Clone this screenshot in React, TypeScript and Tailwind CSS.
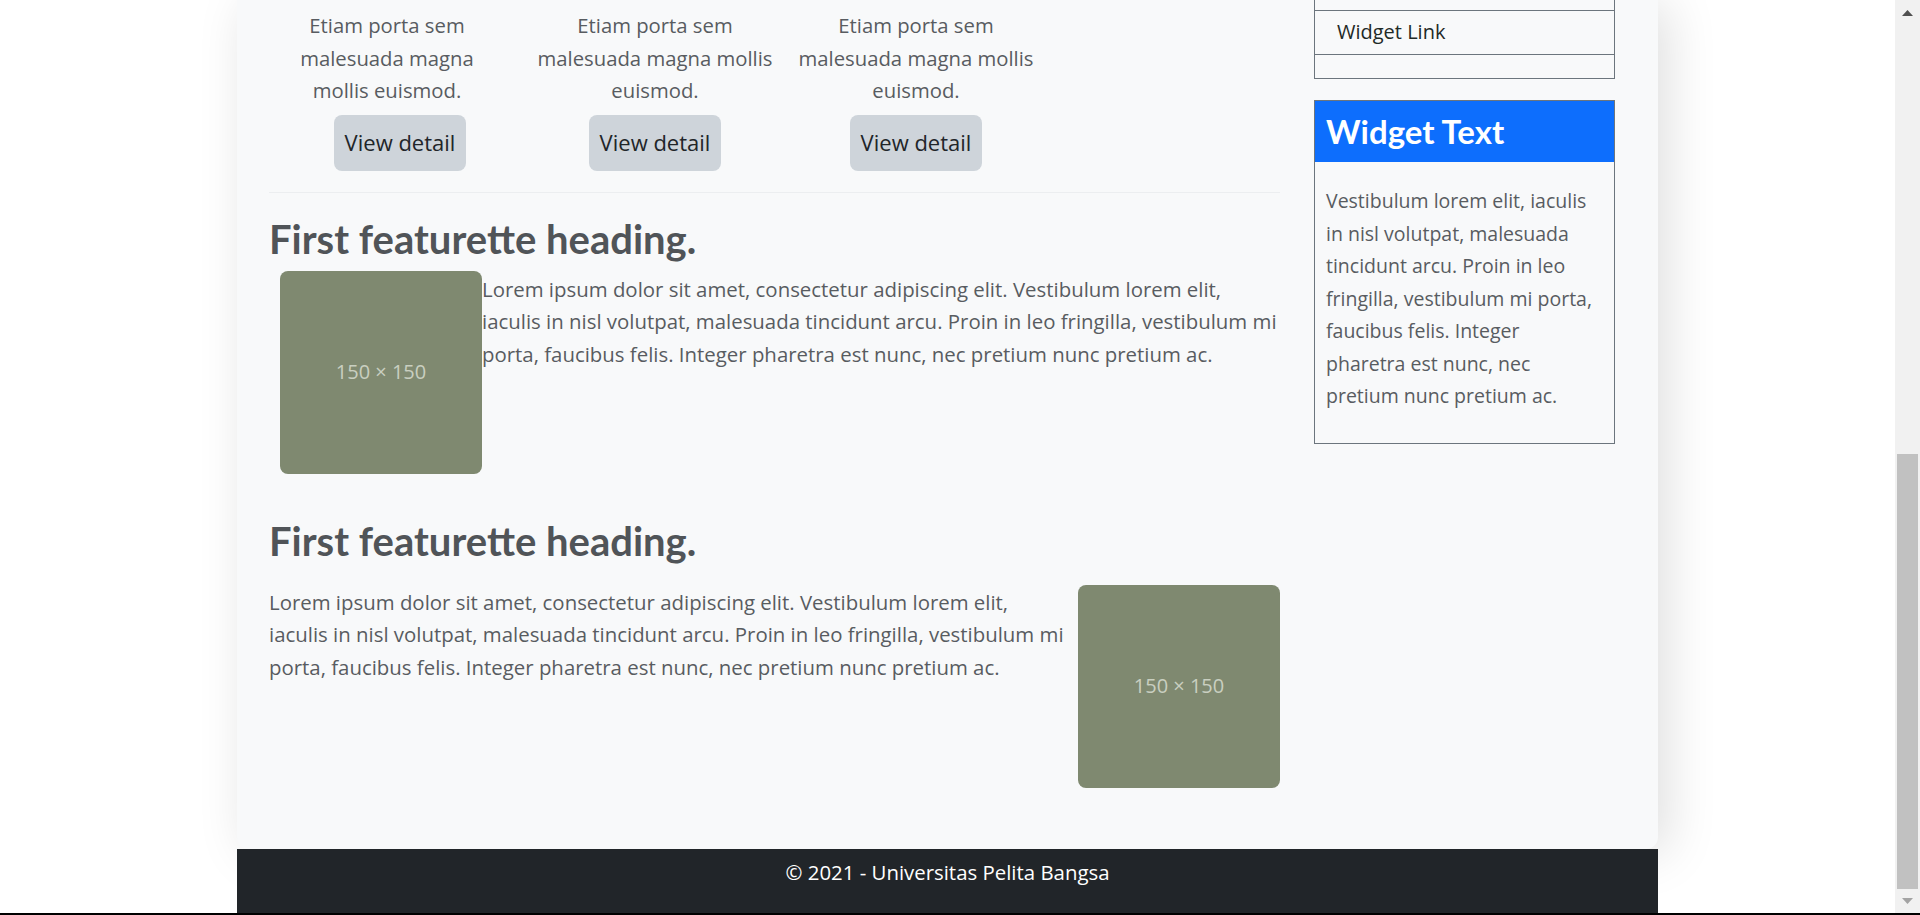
import React from "react";

const body = "font-['Open_Sans','Liberation_Sans',sans-serif]";
const heading = "font-['Lato','Liberation_Sans',sans-serif]";

function Lines({ lines }: { lines: string[] }) {
  return (
    <>
      {lines.map((l, i) => (
        <React.Fragment key={i}>
          {l}
          {i < lines.length - 1 && <br />}
        </React.Fragment>
      ))}
    </>
  );
}

function Placeholder({ className = "" }: { className?: string }) {
  return (
    <div
      className={`w-[202px] h-[203px] flex-none rounded-[8px] bg-[#7f8970] flex items-center justify-center text-[20px] text-[#c9cfc0] ${className}`}
    >
      150 × 150
    </div>
  );
}

function MarketingCol({
  lines,
  className = "",
  btnClass = "",
}: {
  lines: string[];
  className?: string;
  btnClass?: string;
}) {
  return (
    <div className={`w-[260px] flex flex-col items-center text-center ${className}`}>
      <p className="text-[20.3px] leading-[32.5px] text-[#585c61] whitespace-nowrap">
        <Lines lines={lines} />
      </p>
      <button
        className={`mt-[8px] w-[132px] h-[56px] rounded-[8px] bg-[#ced4da] text-[22px] text-[#212529] ${btnClass}`}
      >
        View detail
      </button>
    </div>
  );
}

export default function App() {
  const lorem = [
    "Lorem ipsum dolor sit amet, consectetur adipiscing elit. Vestibulum lorem elit,",
    "iaculis in nisl volutpat, malesuada tincidunt arcu. Proin in leo fringilla, vestibulum mi",
    "porta, faucibus felis. Integer pharetra est nunc, nec pretium nunc pretium ac.",
  ];
  const widget = [
    "Vestibulum lorem elit, iaculis",
    "in nisl volutpat, malesuada",
    "tincidunt arcu. Proin in leo",
    "fringilla, vestibulum mi porta,",
    "faucibus felis. Integer",
    "pharetra est nunc, nec",
    "pretium nunc pretium ac.",
  ];

  return (
    <div className={`w-[1920px] h-[915px] flex flex-col overflow-hidden bg-white ${body}`}>
      <div className="h-[913px] flex">
        {/* page */}
        <div className="flex-1 overflow-hidden">
          <div className="w-[1421px] mx-auto flex flex-col">
            <div className="h-[849px] bg-[#f8f9fa] rounded-b-[12px] shadow-[10px_4px_50px_rgba(0,0,0,0.13)] flex">
              {/* main column */}
              <div className="w-[1011px] ml-[32px] flex flex-col">
                <div className="flex pt-[9px]">
                  <MarketingCol
                    className="ml-[-12px]"
                    btnClass="ml-[26px]"
                    lines={["Etiam porta sem", "malesuada magna", "mollis euismod."]}
                  />
                  <MarketingCol
                    className="ml-[8px]"
                    lines={["Etiam porta sem", "malesuada magna mollis", "euismod."]}
                  />
                  <MarketingCol
                    className="ml-[1px]"
                    lines={["Etiam porta sem", "malesuada magna mollis", "euismod."]}
                  />
                </div>

                <hr className="mt-[21px] border-0 border-t border-[#eceef0]" />

                <h2 className={`mt-[22px] text-[40px] leading-[48px] font-bold text-[#505458] ${heading}`}>
                  First featurette heading.
                </h2>
                <div className="flex mt-[8px]">
                  <Placeholder className="ml-[11px]" />
                  <p className="mt-[2px] text-[20.4px] leading-[32.5px] text-[#585c61] whitespace-nowrap">
                    <Lines lines={lorem} />
                  </p>
                </div>

                <h2 className={`mt-[43px] text-[40px] leading-[48px] font-bold text-[#505458] ${heading}`}>
                  First featurette heading.
                </h2>
                <div className="flex items-start mt-[20px]">
                  <p className="mt-[1px] text-[20.4px] leading-[32.5px] text-[#585c61] whitespace-nowrap">
                    <Lines lines={lorem} />
                  </p>
                  <Placeholder className="ml-auto" />
                </div>
              </div>

              {/* sidebar */}
              <div className="w-[301px] ml-[34px] flex flex-col">
                <ul className="mt-[-34px] border border-[#6c757d] text-[20px] leading-[32.5px] text-[#1f2a27]">
                  <li className="h-[44px] border-b border-[#6c757d] pl-[22px] flex items-center">Widget Link</li>
                  <li className="h-[44px] border-b border-[#6c757d] pl-[22px] flex items-center">Widget Link</li>
                  <li className="h-[23px]" />
                </ul>
                <div className="mt-[21px] border border-[#6c757d]">
                  <div className="h-[61px] bg-[#0d6efd] px-[11px] flex items-center">
                    <h3 className={`text-[33px] font-bold text-white leading-none ${heading}`}>Widget Text</h3>
                  </div>
                  <p className="pt-[23px] pb-[30px] px-[11px] text-[19.5px] leading-[32.5px] text-[#585c61] whitespace-nowrap">
                    <Lines lines={widget} />
                  </p>
                </div>
              </div>
            </div>

            <footer className="h-[64px] bg-[#212529] pt-[7px] text-center text-[20.4px] leading-[32.5px] text-white">
              © 2021 - Universitas Pelita Bangsa
            </footer>
          </div>
        </div>

        {/* scrollbar */}
        <div className="w-[25px] bg-[#f1f1f1] flex flex-col items-center">
          <div className="h-[25px] flex items-center justify-center">
            <svg width="11" height="6" viewBox="0 0 11 6">
              <path d="M5.5 0 L11 6 L0 6 Z" fill="#505050" />
            </svg>
          </div>
          <div className="flex-1" />
          <div className="w-[21px] h-[435px] bg-[#c1c1c1]" />
          <div className="h-[24px] flex items-center justify-center">
            <svg width="11" height="6" viewBox="0 0 11 6">
              <path d="M0 0 L11 0 L5.5 6 Z" fill="#a3a3a3" />
            </svg>
          </div>
        </div>
      </div>
      <div className="h-[2px] bg-black" />
    </div>
  );
}
